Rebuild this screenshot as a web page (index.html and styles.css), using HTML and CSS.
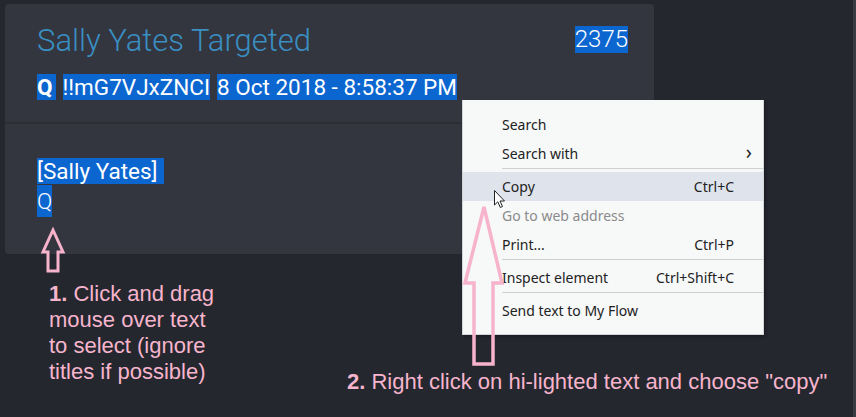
FILE: index.html
```html
<!DOCTYPE html>
<html lang="en">
<head>
    <meta charset="UTF-8">
    <meta name="viewport" content="width=device-width, initial-scale=1.0">
    <title>Q Drop</title>
    <link rel="stylesheet" href="styles.css">
</head>
<body>
    <div class="card">
        <div class="card-head">
            <div class="title-row">
                <h1 class="title">Sally Yates Targeted</h1>
                <span class="sel num">2375</span>
            </div>
            <div class="meta">
                <span class="sel q">Q</span>
                <span class="sel">!!mG7VJxZNCI</span>
                <span class="sel">8 Oct 2018 - 8:58:37 PM</span>
            </div>
        </div>
        <div class="card-body">
            <div><span class="sel body-line">[Sally Yates]</span></div>
            <div><span class="sel sig">Q</span></div>
        </div>
    </div>

    <div class="note note-one"><b>1.</b> Click and drag<br>mouse over text<br>to select (ignore<br>titles if possible)</div>
    <div class="note note-two"><b>2.</b> Right click on hi-lighted text and choose "copy"</div>

    <div class="menu">
        <div class="item">Search</div>
        <div class="item">Search with <span class="chev">&#8250;</span></div>
        <div class="sep"></div>
        <div class="item active">Copy <span class="key">Ctrl+C</span></div>
        <div class="item disabled">Go to web address</div>
        <div class="item">Print... <span class="key">Ctrl+P</span></div>
        <div class="sep"></div>
        <div class="item">Inspect element <span class="key">Ctrl+Shift+C</span></div>
        <div class="sep"></div>
        <div class="item">Send text to My Flow</div>
    </div>

    <svg class="marks" width="856" height="417" viewBox="0 0 856 417">
        <polygon points="53,230 63,252 58,252 58,271 48,271 48,252 43,252" fill="none" stroke="#f7b3cb" stroke-width="3" stroke-linejoin="miter"/>
        <polygon points="484,207 502,283 493,283 493,364 474,364 474,283 465,283" fill="none" stroke="#f7b3cb" stroke-width="3.5" stroke-linejoin="miter"/>
        <path d="M494.5 190.5 L494.5 205 L497.8 201.8 L500.3 207.5 L502.5 206.5 L500 201 L504.5 201 Z" fill="#fff" stroke="#222" stroke-width="1"/>
    </svg>
</body>
</html>
```

FILE: styles.css
```css
body {
    margin: 0;
    width: 856px;
    height: 417px;
    background-color: #25272f;
    font-family: Roboto, "Noto Sans", sans-serif;
    box-shadow: inset -3px 0 0 #3a3c43;
    overflow: hidden;
    padding-top: 4px;
    box-sizing: border-box;
}
.card {
    margin-left: 5px;
    width: 649px;
    height: 250px;
    background: #33363e;
    border-radius: 4px;
    display: flex;
    flex-direction: column;
}
.card-head {
    height: 120px;
    box-sizing: border-box;
    border-bottom: 2px solid #2c2e35;
    padding: 18px 26px 0 32px;
}
.title-row {
    display: flex;
    justify-content: space-between;
    align-items: center;
}
.title {
    margin: 0;
    font-weight: 300;
    font-size: 31px;
    color: #3a8fc3;
    line-height: 38px;
}
.sel {
    background: #0c66d0;
    color: #fff;
}
.num {
    font-size: 24px;
    line-height: 27px;
    font-weight: 300;
    margin-top: -4px;
}
.meta {
    margin-top: 14px;
    font-size: 22.5px;
    line-height: 26px;
    display: flex;
    gap: 7px;
}
.meta .q {
    font-weight: 700;
    padding: 0 3px 0 0;
}
.card-body {
    padding: 34px 0 0 32px;
    font-size: 22.5px;
    line-height: 27px;
}
.body-line {
    padding-right: 6px;
}
.sig {
    font-weight: 300;
    display: inline-block;
    height: 32px;
    line-height: 32px;
}
.note {
    position: absolute;
    font-family: "Liberation Sans", Arial, sans-serif;
    font-size: 22px;
    line-height: 26px;
    color: #f6b5cc;
}
.note-one {
    left: 49px;
    top: 281px;
}
.note-two {
    left: 347px;
    top: 369px;
}
.menu {
    position: absolute;
    left: 462px;
    top: 100px;
    width: 302px;
    height: 235px;
    box-sizing: border-box;
    padding-top: 10px;
    background: #f7f8f8;
    border: 1px solid #d4d5d6;
    border-top: none;
    font-family: "Noto Sans", "Open Sans", sans-serif;
    font-size: 14px;
    color: #222;
    box-shadow: 2px 2px 3px rgba(0, 0, 0, 0.25);
}
.item {
    height: 29px;
    display: flex;
    align-items: center;
    justify-content: space-between;
    padding: 0 29px 0 39px;
}
.item.active {
    background: #dfe4ec;
}
.item.disabled {
    color: #8b8b8b;
}
.chev {
    font-size: 20px;
    margin-right: -18px;
    line-height: 20px;
    margin-top: -4px;
}
.sep {
    height: 1px;
    background: #cfd0d2;
    margin: 0 0 3px 39px;
}
.marks {
    position: absolute;
    left: 0;
    top: 0;
}
```
